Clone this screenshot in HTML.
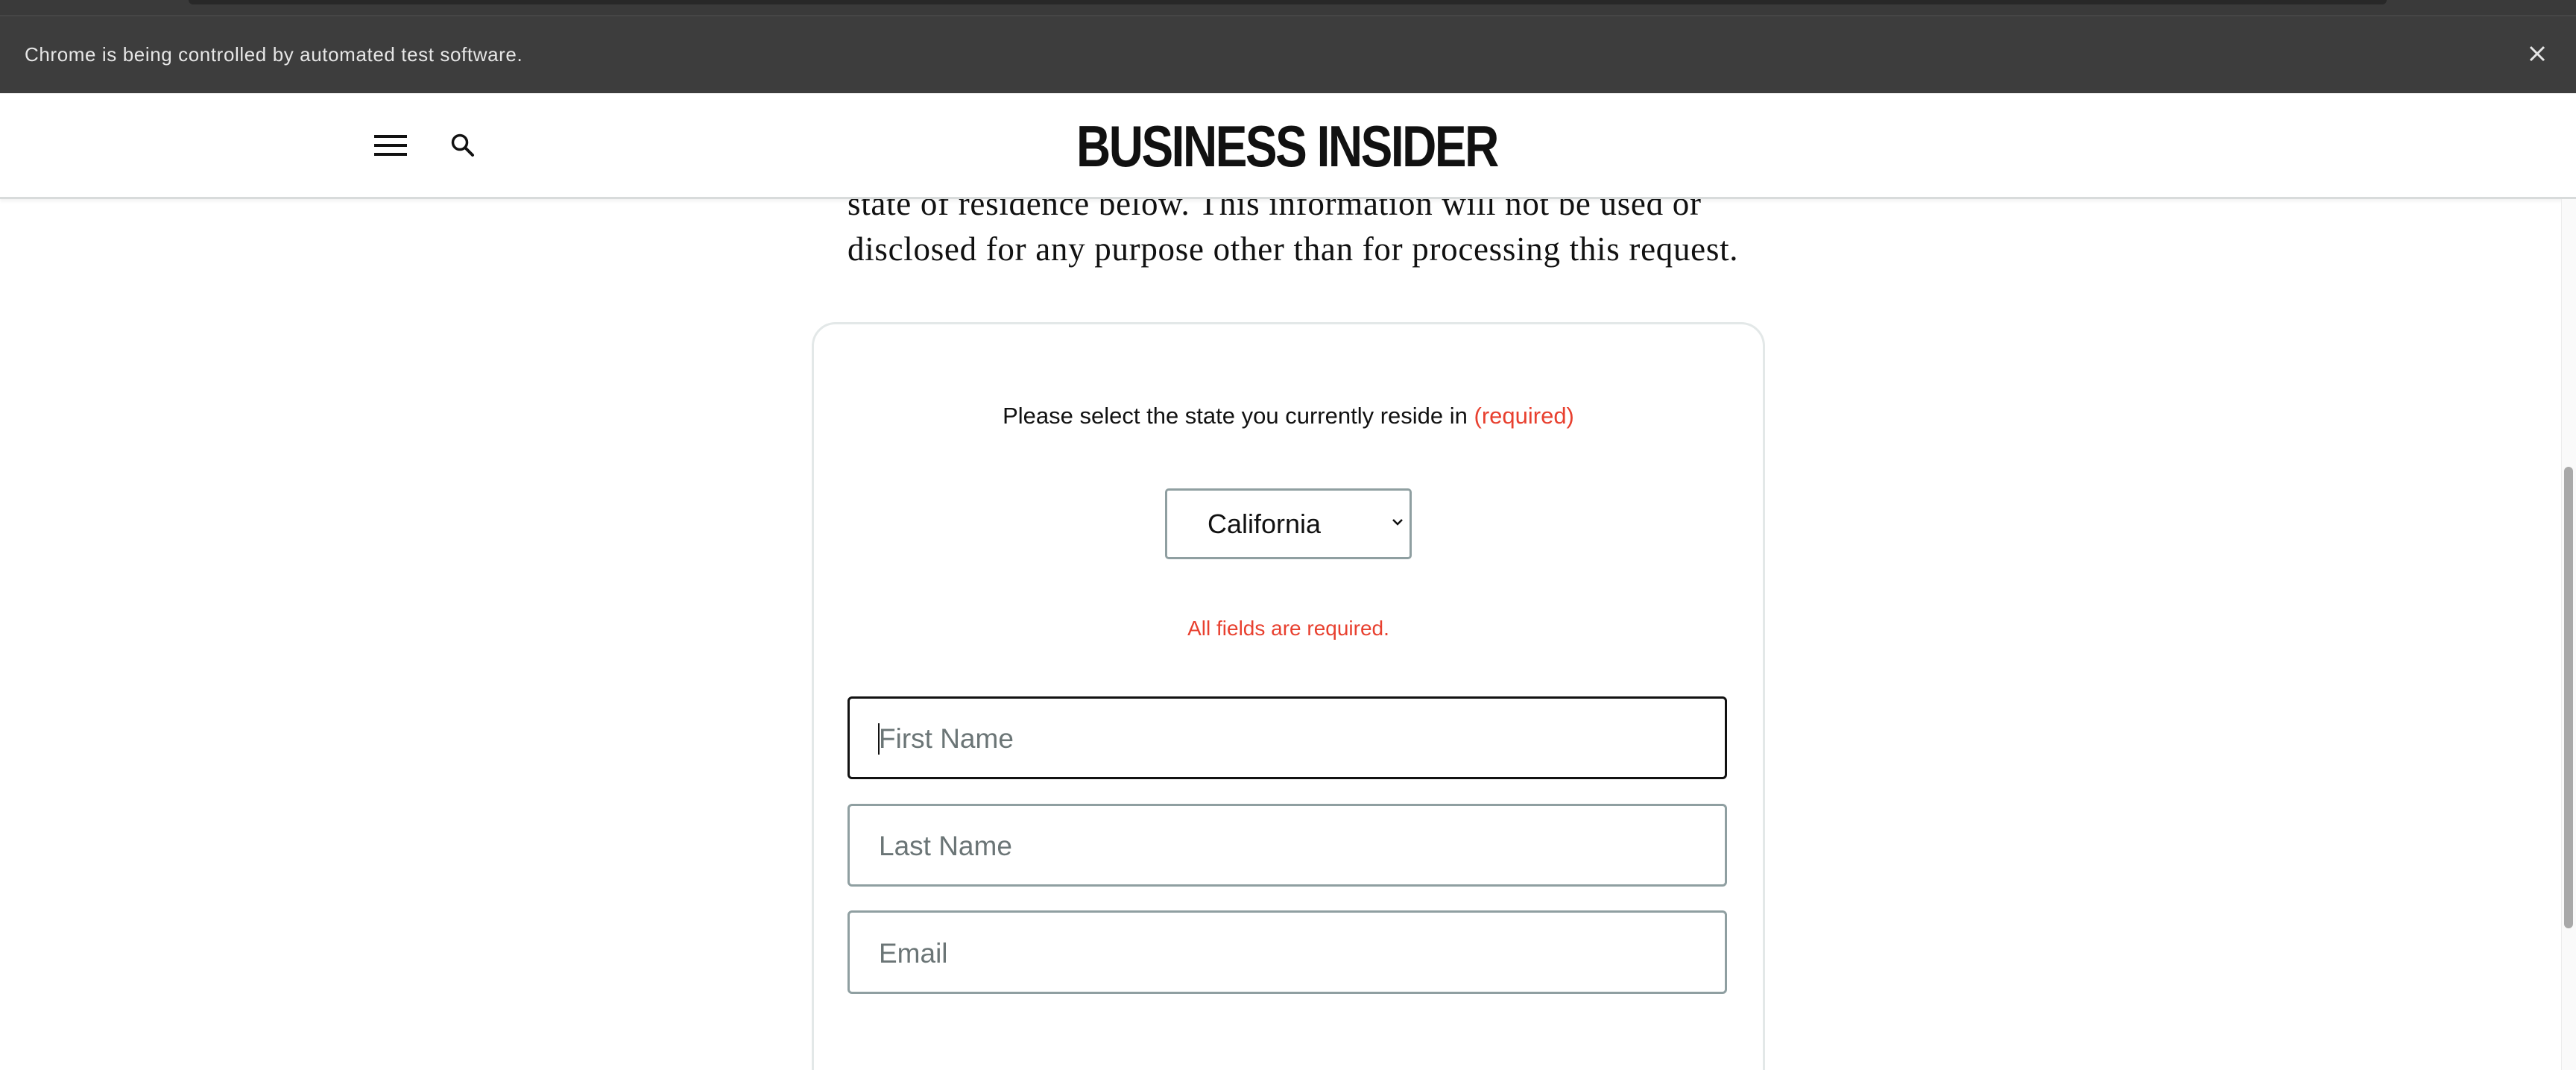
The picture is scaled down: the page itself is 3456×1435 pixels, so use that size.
<!DOCTYPE html>
<html><head><meta charset="utf-8"><style>
*{margin:0;padding:0;box-sizing:border-box}
html,body{width:3456px;height:1435px;overflow:hidden;background:#fff;position:relative;font-family:"Liberation Sans",sans-serif}
.abs{position:absolute}
</style></head><body>
<div class="abs" style="left:0;top:0;width:3456px;height:20px;background:#3a3a3a"></div>
<div class="abs" style="left:253px;top:0;width:2949px;height:6px;background:#282828;border-radius:0 0 8px 8px"></div>
<div class="abs" style="left:0;top:20px;width:3456px;height:105px;background:#3d3d3d;border-top:2px solid #464646"></div>
<div class="abs" style="left:33px;top:56px;font-size:26px;color:#e6e6e6;line-height:34px;letter-spacing:0.6px">Chrome is being controlled by automated test software.</div>
<svg class="abs" style="left:3392px;top:60px" width="24" height="24" viewBox="0 0 24 24"><path d="M3 3L21 21M21 3L3 21" stroke="#e6e6e6" stroke-width="3"/></svg>

<div class="abs" style="left:1137px;top:243px;font-family:'Liberation Serif',serif;font-size:45px;letter-spacing:0.7px;line-height:61px;color:#111;white-space:nowrap">state of residence below. This information will not be used or<br>disclosed for any purpose other than for processing this request.</div>

<div class="abs" style="left:0;top:125px;width:3456px;height:142px;background:#fff;border-bottom:3px solid #d8dbdb;box-shadow:0 3px 4px rgba(0,0,0,0.05)"></div>
<div class="abs" style="left:502px;top:181px;width:44px;height:4px;background:#111"></div>
<div class="abs" style="left:502px;top:193px;width:44px;height:4px;background:#111"></div>
<div class="abs" style="left:502px;top:205px;width:44px;height:4px;background:#111"></div>
<svg class="abs" style="left:604px;top:178px" width="34" height="34" viewBox="0 0 34 34"><circle cx="13" cy="13" r="9.5" fill="none" stroke="#111" stroke-width="3.5"/><path d="M20 20L30 30" stroke="#111" stroke-width="4" stroke-linecap="round"/></svg>
<div class="abs" style="left:1444px;top:156px;width:564px;height:80px;overflow:visible">
<div style="font-size:78px;font-weight:bold;line-height:80px;letter-spacing:-3px;color:#111;white-space:nowrap;transform:scaleX(0.82);transform-origin:left center">BUSINESS INSIDER</div></div>

<div class="abs" style="left:0;top:0;width:3456px;height:1435px;overflow:hidden">
<div class="abs" style="left:1089px;top:432px;width:1279px;height:1100px;border:3px solid #e3e8e8;border-radius:32px;background:#fff"></div>
</div>
<div class="abs" style="left:1089px;top:538px;width:1279px;text-align:center;font-size:31px;line-height:40px;color:#111">Please select the state you currently reside in <span style="color:#e8402f">(required)</span></div>
<div class="abs" style="left:1563px;top:655px;width:331px;height:95px;border:3px solid #8f9fa1;border-radius:5px"></div>
<div class="abs" style="left:1620px;top:682px;font-size:36px;line-height:42px;color:#111">California</div>
<svg class="abs" style="left:1866px;top:693px" width="18" height="14" viewBox="0 0 18 14"><path d="M3 4L9 10L15 4" fill="none" stroke="#111" stroke-width="2.5"/></svg>
<div class="abs" style="left:1089px;top:825px;width:1279px;text-align:center;font-size:28px;line-height:36px;color:#e8402f">All fields are required.</div>

<div class="abs" style="left:1137px;top:934px;width:1180px;height:111px;border:3px solid #111;border-radius:6px"></div>
<div class="abs" style="left:1178px;top:970px;width:2px;height:42px;background:#111"></div>
<div class="abs" style="left:1179px;top:969px;font-size:37px;line-height:44px;color:#6b7576">First Name</div>
<div class="abs" style="left:1137px;top:1078px;width:1180px;height:111px;border:3px solid #8f9fa1;border-radius:6px"></div>
<div class="abs" style="left:1179px;top:1113px;font-size:37px;line-height:44px;color:#6b7576">Last Name</div>
<div class="abs" style="left:1137px;top:1221px;width:1180px;height:112px;border:3px solid #8f9fa1;border-radius:6px"></div>
<div class="abs" style="left:1179px;top:1257px;font-size:37px;line-height:44px;color:#6b7576">Email</div>

<div class="abs" style="left:3436px;top:267px;width:20px;height:1168px;background:#fafafa;border-left:1px solid #ececec"></div>
<div class="abs" style="left:3440px;top:626px;width:12px;height:619px;background:#a9a9a9;border-radius:6px"></div>
</body></html>
